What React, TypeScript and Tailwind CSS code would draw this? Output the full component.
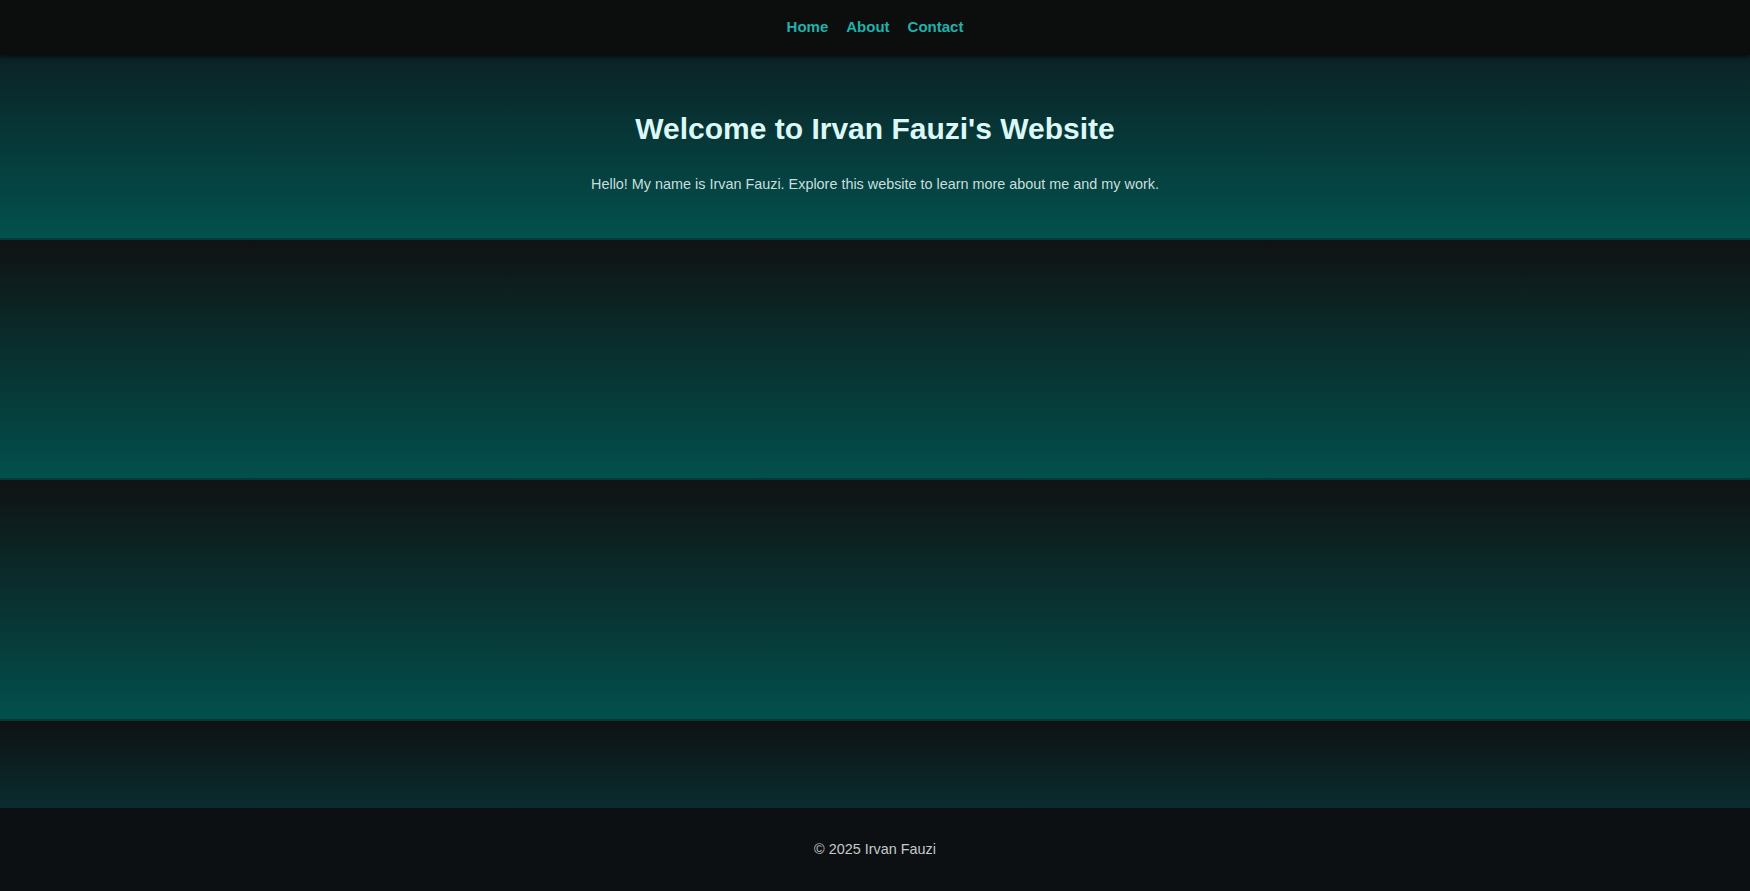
const links = ["Home", "About", "Contact"]

export default function App() {
  return (
    <div className="min-h-screen bg-[#0e1112] font-['Liberation_Sans',Arial,sans-serif]">
      <nav className="relative z-10 flex h-[55px] items-center justify-center gap-[18px] bg-[#0c0d0d] shadow-[0_2px_4px_rgba(0,0,0,0.6)]">
        {links.map((l) => (
          <a key={l} href="#" className="text-[15px] font-bold text-[#20b2aa]">
            {l}
          </a>
        ))}
      </nav>

      <section className="h-[185px] bg-[linear-gradient(to_bottom,#0b2225,#02514e)] border-b-2 border-[#023a39] px-4 pt-[56px] text-center">
        <h1 className="text-[30px] font-bold leading-[36px] text-[#dcf8f6]">
          Welcome to Irvan Fauzi's Website
        </h1>
        <p className="mt-[27px] text-[14.4px] leading-[20px] text-[#c9dfdd]">
          Hello! My name is Irvan Fauzi. Explore this website to learn more about me and my work.
        </p>
      </section>

      <section className="h-[240px] bg-[linear-gradient(to_bottom,#101213,#02504d)] border-b-2 border-[#023a39]" />
      <section className="h-[241px] bg-[linear-gradient(to_bottom,#101213,#02504d)] border-b-2 border-[#023a39]" />
      <section className="h-[87px] bg-[linear-gradient(to_bottom,#0e1213,#0a2c2f)]" />

      <footer className="flex h-[83px] items-center justify-center bg-[#0c1012]">
        <p className="text-[14.4px] text-[#c3cbcb]">© 2025 Irvan Fauzi</p>
      </footer>
    </div>
  )
}
